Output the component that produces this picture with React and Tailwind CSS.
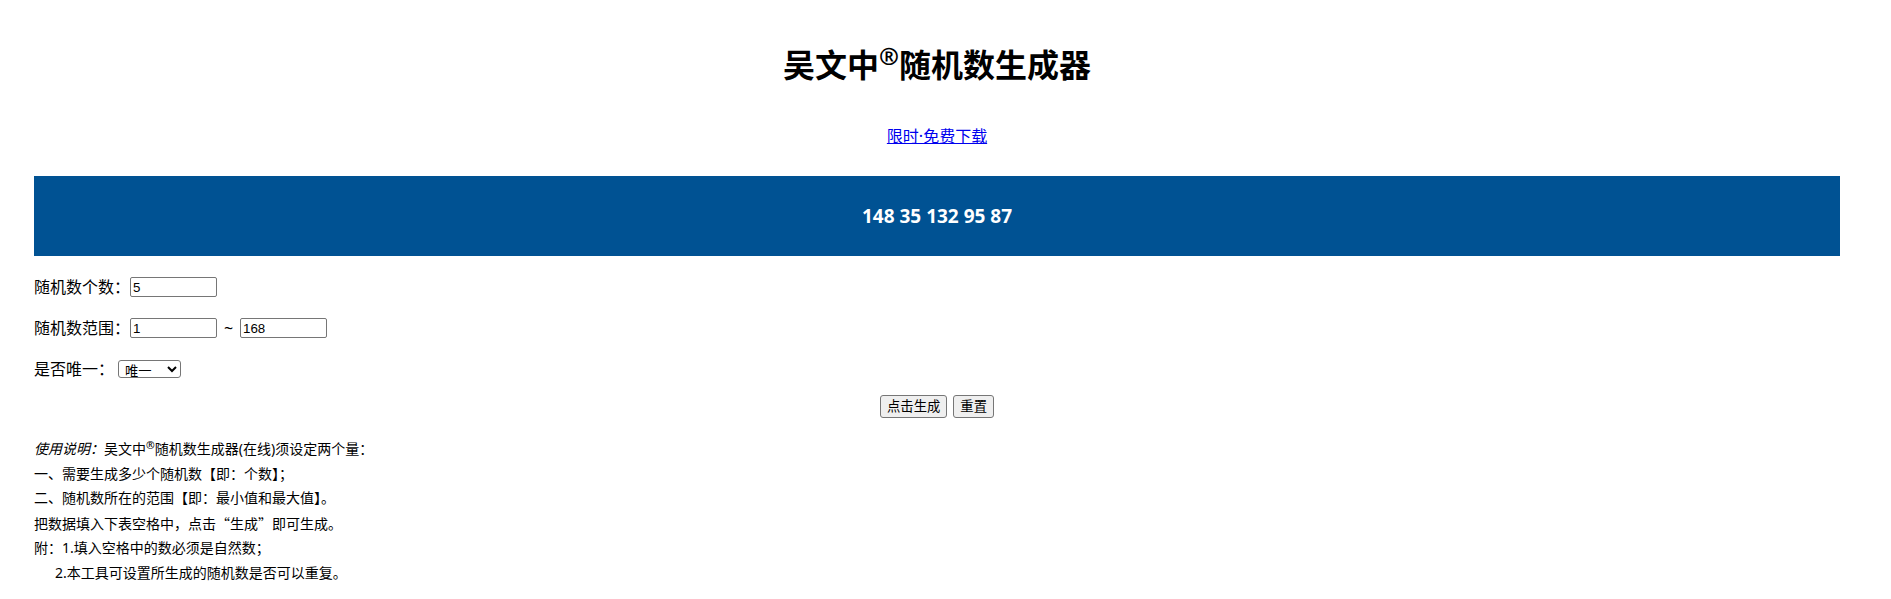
import { useState } from "react";

const fieldCls =
  "w-[87px] h-[20px] border border-[#767676] rounded-[2px] px-[2px] text-[13.33px] leading-none bg-white text-black font-['Liberation_Sans','Noto_Sans_CJK_SC',sans-serif]";
const btnCls =
  "h-[23px] px-[6px] border border-[#767676] rounded-[3px] bg-[#efefef] text-[13.33px] leading-none text-black";

export default function App() {
  const [count, setCount] = useState("5");
  const [min, setMin] = useState("1");
  const [max, setMax] = useState("168");
  const [unique, setUnique] = useState("1");
  const [nums, setNums] = useState([148, 35, 132, 95, 87]);

  const generate = () => {
    const n = Number(count) || 0;
    const lo = Number(min) || 0;
    const hi = Number(max) || 0;
    const out = [];
    let guard = 0;
    while (out.length < n && guard < 10000) {
      guard++;
      const v = lo + Math.floor(Math.random() * (hi - lo + 1));
      if (unique === "1" && out.includes(v)) continue;
      out.push(v);
    }
    setNums(out);
  };

  const reset = () => {
    setCount("5");
    setMin("1");
    setMax("168");
    setUnique("1");
  };

  return (
    <div className="w-[1874px] bg-white text-black px-[34px] font-['Noto_Sans','Noto_Sans_CJK_SC',sans-serif]">
      {/* 标题 */}
      <h1 className="pt-[45px] text-[32px] leading-[40px] font-bold text-center">
        吴文中<sup>®</sup>随机数生成器
      </h1>

      <div className="mt-[40px] text-[16px] leading-[22px] text-center">
        <a href="#" className="text-[#0000ee] underline">
          限时·免费下载
        </a>
      </div>

      {/* 结果 */}
      <div className="mt-[29px] h-[80px] bg-[#005293] flex items-center justify-center text-white font-bold text-[19px] font-['Open_Sans',sans-serif]">
        {nums.join(" ")}
      </div>

      {/* 表单 */}
      <div className="mt-[19px] flex flex-col gap-[17px] text-[16px]">
        <div className="flex items-center h-[24px]">
          <span>随机数个数：</span>
          <input
            className={fieldCls}
            value={count}
            onChange={(e) => setCount(e.target.value)}
          />
        </div>
        <div className="flex items-center h-[24px]">
          <span>随机数范围：</span>
          <input
            className={fieldCls}
            value={min}
            onChange={(e) => setMin(e.target.value)}
          />
          <span className="w-[11px] mx-[6px] text-center">~</span>
          <input
            className={fieldCls}
            value={max}
            onChange={(e) => setMax(e.target.value)}
          />
        </div>
        <div className="flex items-center h-[24px]">
          <span>是否唯一：</span>
          <select
            className="ml-[4px] w-[63px] h-[18px] border border-[#767676] rounded-[3px] bg-white text-[13.33px] leading-none pl-[2px]"
            value={unique}
            onChange={(e) => setUnique(e.target.value)}
          >
            <option value="1">唯一</option>
            <option value="0">可重复</option>
          </select>
        </div>
      </div>

      <div className="mt-[14px] flex justify-center gap-[6px]">
        <button className={btnCls} onClick={generate}>
          点击生成
        </button>
        <button className={btnCls} onClick={reset}>
          重置
        </button>
      </div>

      {/* 使用说明 */}
      <div className="mt-[19px] text-[14px] leading-[24.5px]">
        <p>
          <i>使用说明：</i>吴文中<sup>®</sup>随机数生成器(在线)须设定两个量：
        </p>
        <p>一、需要生成多少个随机数【即：个数】；</p>
        <p>二、随机数所在的范围【即：最小值和最大值】。</p>
        <p>
          把数据填入下表空格中，点击
          <span className="font-['Noto_Sans_CJK_SC',sans-serif]">“</span>生成
          <span className="font-['Noto_Sans_CJK_SC',sans-serif]">”</span>即可生成。
        </p>
        <p>附：1.填入空格中的数必须是自然数；</p>
        <p className="pl-[21px]">2.本工具可设置所生成的随机数是否可以重复。</p>
      </div>
    </div>
  );
}
